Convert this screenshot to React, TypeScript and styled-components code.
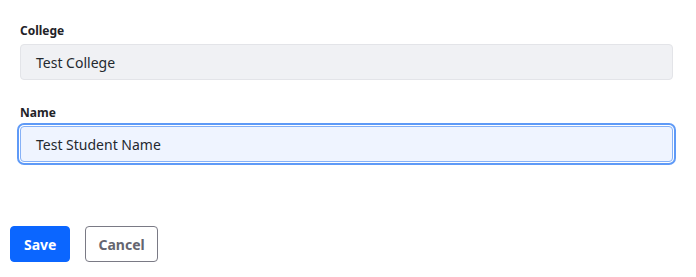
import React from "react";
import styled, { createGlobalStyle } from "styled-components";

const GlobalStyle = createGlobalStyle`
  body {
    margin: 0;
    background: #fff;
    font-family: "Noto Sans", "Open Sans", sans-serif;
  }
`;

const Page = styled.div`
  padding: 22px 10px 0 10px;
`;

const Fields = styled.div`
  display: flex;
  flex-direction: column;
  gap: 24px;
  padding: 0 13px 0 10px;
`;

const Field = styled.div`
  display: flex;
  flex-direction: column;
  gap: 4px;
`;

const Label = styled.label`
  font-size: 12px;
  font-weight: 700;
  line-height: 18px;
  color: #1f2328;
`;

const Input = styled.div<{ $focused?: boolean }>`
  box-sizing: border-box;
  height: 36px;
  display: flex;
  align-items: center;
  padding: 0 15px;
  border-radius: 4px;
  font-size: 14px;
  color: #24292f;
  border: 1px solid ${(p) => (p.$focused ? "#86b1f7" : "#e3e4e8")};
  background: ${(p) => (p.$focused ? "#eff4ff" : "#f0f1f4")};
  box-shadow: ${(p) =>
    p.$focused ? "0 0 0 1px #ffffff, 0 0 0 3px #5f9af7" : "none"};
`;

const Actions = styled.div`
  display: flex;
  gap: 15px;
  margin-top: 64px;
`;

const Button = styled.button<{ $primary?: boolean }>`
  box-sizing: border-box;
  height: 36px;
  padding: 0 ${(p) => (p.$primary ? "13px" : "12px")};
  border-radius: 4px;
  font-family: inherit;
  font-size: 14px;
  font-weight: 700;
  cursor: pointer;
  border: 1px solid ${(p) => (p.$primary ? "#0b66ff" : "#7a7a85")};
  background: ${(p) => (p.$primary ? "#0b66ff" : "#ffffff")};
  color: ${(p) => (p.$primary ? "#ffffff" : "#65656f")};
`;

const App: React.FC = () => {
  return (
    <Page>
      <GlobalStyle />
      <Fields>
        <Field>
          <Label>College</Label>
          <Input>Test College</Input>
        </Field>
        <Field>
          <Label>Name</Label>
          <Input $focused>Test Student Name</Input>
        </Field>
      </Fields>
      <Actions>
        <Button $primary>Save</Button>
        <Button>Cancel</Button>
      </Actions>
    </Page>
  );
};

export default App;
